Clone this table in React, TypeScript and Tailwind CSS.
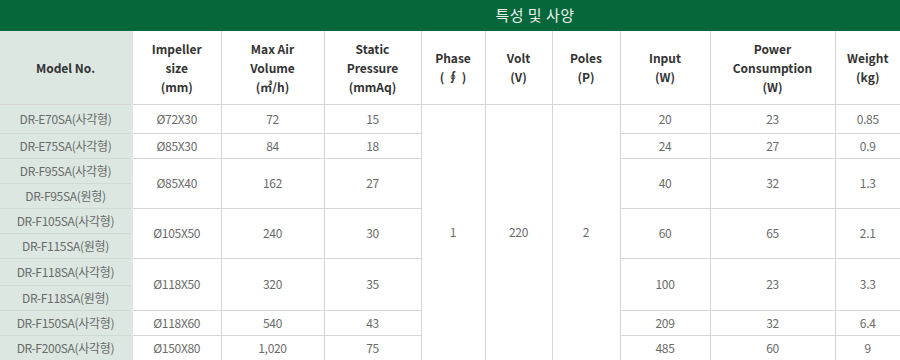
const font = { fontFamily: '"Noto Sans CJK KR", "Noto Sans", sans-serif' };

type Row = {
  model: string;
  h: string;
  impeller?: string;
  air?: string;
  pressure?: string;
  input?: string;
  power?: string;
  weight?: string;
  span?: number;
};

const rows: Row[] = [
  { model: "DR-E70SA(사각형)", h: "h-[29px]", impeller: "Ø72X30", air: "72", pressure: "15", input: "20", power: "23", weight: "0.85" },
  { model: "DR-E75SA(사각형)", h: "h-[25px]", impeller: "Ø85X30", air: "84", pressure: "18", input: "24", power: "27", weight: "0.9" },
  { model: "DR-F95SA(사각형)", h: "h-[25px]", impeller: "Ø85X40", air: "162", pressure: "27", input: "40", power: "32", weight: "1.3", span: 2 },
  { model: "DR-F95SA(원형)", h: "h-[25px]" },
  { model: "DR-F105SA(사각형)", h: "h-[25px]", impeller: "Ø105X50", air: "240", pressure: "30", input: "60", power: "65", weight: "2.1", span: 2 },
  { model: "DR-F115SA(원형)", h: "h-[25px]" },
  { model: "DR-F118SA(사각형)", h: "h-[27px]", impeller: "Ø118X50", air: "320", pressure: "35", input: "100", power: "23", weight: "3.3", span: 2 },
  { model: "DR-F118SA(원형)", h: "h-[25px]" },
  { model: "DR-F150SA(사각형)", h: "h-[25px]", impeller: "Ø118X60", air: "540", pressure: "43", input: "209", power: "32", weight: "6.4" },
  { model: "DR-F200SA(사각형)", h: "h-[25px]", impeller: "Ø150X80", air: "1,020", pressure: "75", input: "485", power: "60", weight: "9" },
];

const th = "border border-[#d6d6d6] text-[12px] font-bold text-[#333] leading-[19px] text-center align-middle";
const td = "border border-[#d6d6d6] text-[12px] tracking-[-0.3px] text-[#6a6a6a] text-center align-middle p-0";

export default function App() {
  return (
    <div className="w-[900px] h-[360px] overflow-hidden bg-white" style={font}>
      {/* Title bar */}
      <div className="h-[31px] bg-[#05673a] flex items-center justify-center pl-[170px]">
        <span className="text-[15px] text-[#e9f2ec] tracking-[0.5px]">특성 및 사양</span>
      </div>

      <table className="w-[900px] table-fixed border-collapse">
        <colgroup>
          <col className="w-[132px]" />
          <col className="w-[89px]" />
          <col className="w-[103px]" />
          <col className="w-[97px]" />
          <col className="w-[64px]" />
          <col className="w-[67px]" />
          <col className="w-[68px]" />
          <col className="w-[90px]" />
          <col className="w-[125px]" />
          <col className="w-[65px]" />
        </colgroup>
        <thead>
          <tr className="h-[73px]">
            <th className={`${th} bg-[#dbe7e0] border-t-0 border-l-0 border-r-2 border-r-[#e4e4e4]`}>Model No.</th>
            <th className={`${th} border-t-0`}>Impeller<br />size<br />(mm)</th>
            <th className={`${th} border-t-0`}>Max Air<br />Volume<br />(㎥/h)</th>
            <th className={`${th} border-t-0`}>Static<br />Pressure<br />(mmAq)</th>
            <th className={`${th} border-t-0`}>Phase<br />( ∮ )</th>
            <th className={`${th} border-t-0`}>Volt<br />(V)</th>
            <th className={`${th} border-t-0`}>Poles<br />(P)</th>
            <th className={`${th} border-t-0`}>Input<br />(W)</th>
            <th className={`${th} border-t-0`}>Power<br />Consumption<br />(W)</th>
            <th className={`${th} border-t-0 border-r-0`}>Weight<br />(kg)</th>
          </tr>
        </thead>
        <tbody>
          {rows.map((r, i) => (
            <tr key={i} className={r.h}>
              <td className={`${td} bg-[#dbe7e0] border-l-0 border-r-2 border-r-[#e4e4e4] border-b-[#cfdcd5]`}>{r.model}</td>
              {r.impeller && (
                <>
                  <td className={td} rowSpan={r.span}>{r.impeller}</td>
                  <td className={td} rowSpan={r.span}>{r.air}</td>
                  <td className={td} rowSpan={r.span}>{r.pressure}</td>
                </>
              )}
              {i === 0 && (
                <>
                  <td className={td} rowSpan={10}>1</td>
                  <td className={td} rowSpan={10}>220</td>
                  <td className={td} rowSpan={10}>2</td>
                </>
              )}
              {r.impeller && (
                <>
                  <td className={td} rowSpan={r.span}>{r.input}</td>
                  <td className={td} rowSpan={r.span}>{r.power}</td>
                  <td className={`${td} border-r-0`} rowSpan={r.span}>{r.weight}</td>
                </>
              )}
            </tr>
          ))}
        </tbody>
      </table>
    </div>
  );
}
